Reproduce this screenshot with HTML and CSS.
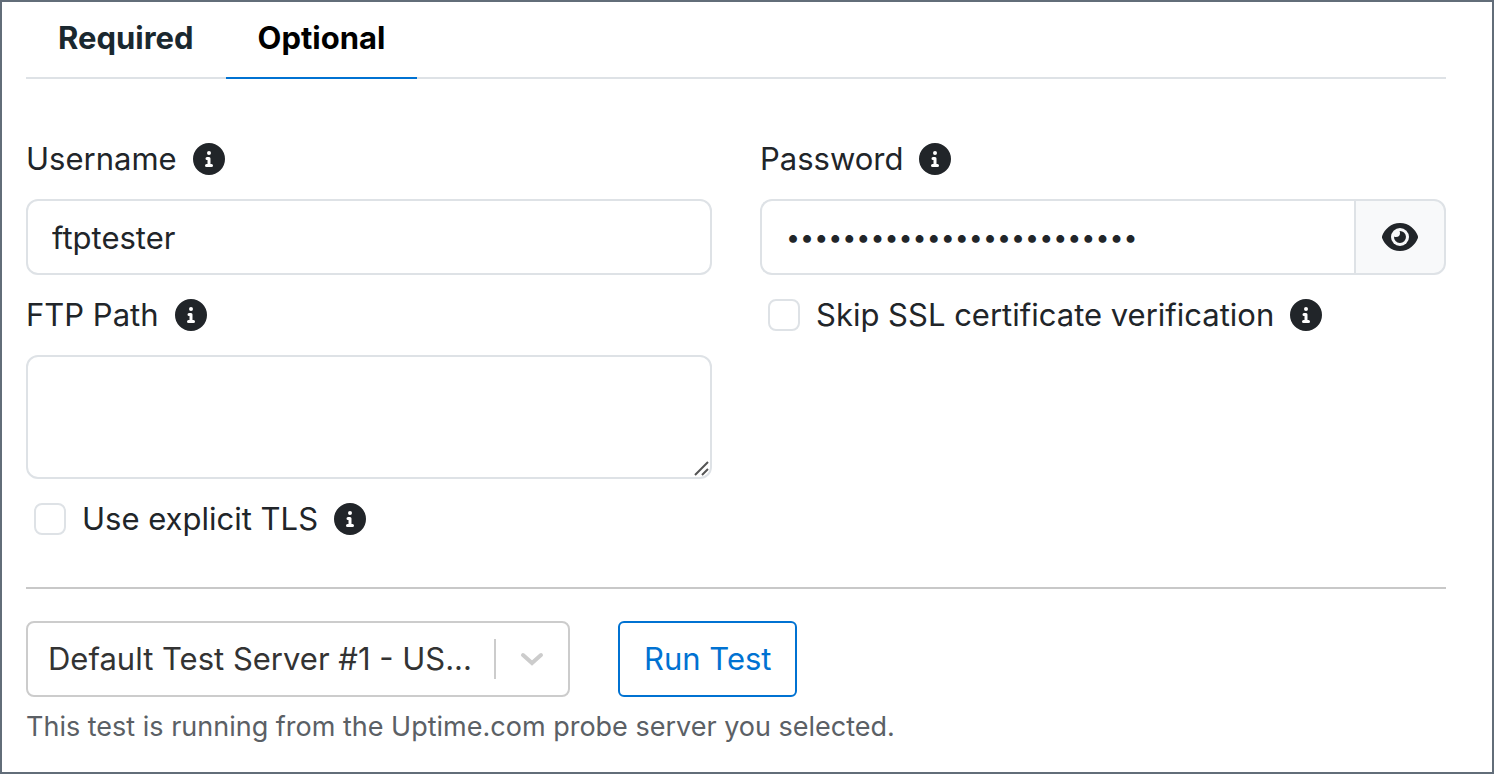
FILE: index.html
```html
<!DOCTYPE html>
<html lang="en">
<head>
    <meta charset="UTF-8">
    <meta name="viewport" content="width=device-width, initial-scale=1.0">
    <link rel="stylesheet" href="styles.css">
    <title>FTP Check</title>
</head>
<body>

<!-- shared icons -->
<svg class="sprite" aria-hidden="true">
    <symbol id="icon-info" viewBox="0 0 512 512">
        <path fill="currentColor" d="M256 0a256 256 0 1 0 0 512 256 256 0 0 0 0-512zm0 128a32 32 0 1 1 0 64 32 32 0 0 1 0-64zm40 256h-80a24 24 0 0 1 0-48h16v-64h-8a24 24 0 0 1 0-48h32a24 24 0 0 1 24 24v88h16a24 24 0 0 1 0 48z"/>
    </symbol>
</svg>

<form class="check-form">
    <div class="tabs">
        <button type="button" class="tab">Required</button>
        <button type="button" class="tab active">Optional</button>
    </div>

    <div class="columns">
        <div class="column">
            <div class="label-row">
                <label for="username">Username</label>
                <svg class="info"><use href="#icon-info"/></svg>
            </div>
            <input type="text" id="username" class="field" value="ftptester">

            <div class="label-row">
                <label for="ftp-path">FTP Path</label>
                <svg class="info"><use href="#icon-info"/></svg>
            </div>
            <div class="textarea-wrap">
                <textarea id="ftp-path" class="field"></textarea>
                <svg class="grip" viewBox="0 0 16 16"><path d="M1 14 14 1M8 14l6-6"/></svg>
            </div>

            <div class="label-row check">
                <input type="checkbox" id="explicit-tls">
                <label for="explicit-tls">Use explicit TLS</label>
                <svg class="info"><use href="#icon-info"/></svg>
            </div>
        </div>

        <div class="column">
            <div class="label-row">
                <label for="password">Password</label>
                <svg class="info"><use href="#icon-info"/></svg>
            </div>
            <div class="input-group">
                <input type="password" id="password" class="field" value="ftptester-password-123456">
                <button type="button" class="reveal" aria-label="Show password">
                    <svg viewBox="0 0 36 28">
                        <path fill="currentColor" d="M18 0C9 0 2.600 6.500.300 12.500a4 4 0 0 0 0 3C2.600 21.500 9 28 18 28s15.400-6.500 17.700-12.500a4 4 0 0 0 0-3C33.400 6.500 27 0 18 0z"/>
                        <circle cx="18" cy="14" r="9" fill="#f8f9fa"/>
                        <path fill="currentColor" d="M18 10a4 4 0 0 1-4 4q-1 0-2-.5A6 6 0 1 0 17.500 8q.5.900.5 2z"/>
                    </svg>
                </button>
            </div>

            <div class="label-row check">
                <input type="checkbox" id="skip-ssl">
                <label for="skip-ssl">Skip SSL certificate verification</label>
                <svg class="info"><use href="#icon-info"/></svg>
            </div>
        </div>
    </div>

    <hr>

    <div class="test-row">
        <div class="select-wrap">
            <select aria-label="Test server">
                <option>Default Test Server #1 - US...</option>
            </select>
            <svg class="arrow" viewBox="0 0 24 16"><path d="M3 4l9 8 9-8"/></svg>
        </div>
        <button type="button" class="run">Run Test</button>
    </div>
    <p class="help">This test is running from the Uptime.com probe server you selected.</p>
</form>

</body>
</html>
```
FILE: styles.css
```css
* {
    box-sizing: border-box;
}

body {
    margin: 0;
    min-height: 100vh;
    border: 2px solid #626d79;
    background-color: #fff;
    color: #212529;
    font-family: Inter, "Liberation Sans", sans-serif;
    font-size: 31px;
    line-height: 48px;
}

button, input, select, textarea {
    font: inherit;
    color: inherit;
    margin: 0;
}

.sprite {
    display: none;
}

.check-form {
    padding: 0 46px 0 24px;
}

/* Tabs */
.tabs {
    display: flex;
    border-bottom: 2px solid #dee2e6;
}

.tab {
    padding: 12px 32px 15px;
    margin-bottom: -2px;
    border: none;
    border-bottom: 2px solid transparent;
    background: none;
    color: #1a282f;
    font-weight: 700;
    cursor: pointer;
}

.tab.active {
    color: #000;
    border-bottom-color: #0072d2;
}

/* Fields */
.columns {
    display: grid;
    grid-template-columns: 1fr 1fr;
    gap: 48px;
    padding-top: 56px;
}

.column {
    display: flex;
    flex-direction: column;
    gap: 16px;
}

.label-row {
    display: flex;
    align-items: center;
    gap: 16px;
}

.check {
    padding-left: 8px;
}

.info {
    width: 32px;
    height: 32px;
}

.field {
    display: block;
    width: 100%;
    height: 76px;
    padding: 12px 24px;
    border: 2px solid #dee2e6;
    border-radius: 12px;
    background-color: #fff;
    outline: none;
}

.textarea-wrap {
    position: relative;
}

textarea.field {
    height: 124px;
    resize: vertical;
}

textarea::-webkit-resizer {
    display: none;
}

.grip {
    position: absolute;
    right: 2px;
    bottom: 2px;
    width: 16px;
    height: 16px;
    fill: none;
    stroke: #555;
    stroke-width: 2;
    pointer-events: none;
}

.input-group {
    display: flex;
}

.input-group .field {
    flex: 1;
    min-width: 0;
    border-right: none;
    border-radius: 12px 0 0 12px;
    font-size: 25px;
}

.reveal {
    display: flex;
    align-items: center;
    justify-content: center;
    width: 92px;
    border: 2px solid #dee2e6;
    border-radius: 0 12px 12px 0;
    background-color: #f8f9fa;
    cursor: pointer;
}

.reveal svg {
    width: 36px;
    height: 28px;
}

input[type="checkbox"] {
    appearance: none;
    width: 32px;
    height: 32px;
    border: 2px solid #dee2e6;
    border-radius: 8px;
    background-color: #fff;
}

input[type="checkbox"]:checked {
    background-color: #0072d2;
}

hr {
    margin: 44px 0 32px;
    border: none;
    border-top: 2px solid #c8c8c8;
}

/* Test server */
.test-row {
    display: flex;
    gap: 48px;
}

.select-wrap {
    position: relative;
    flex: 0 1 544px;
}

select {
    appearance: none;
    width: 100%;
    height: 76px;
    padding: 0 76px 0 20px;
    border: 2px solid #ccc;
    border-radius: 8px;
    background-color: #fff;
    color: #333;
}

.arrow {
    position: absolute;
    top: 18px;
    right: 2px;
    width: 74px;
    height: 40px;
    padding: 12px 24px;
    border-left: 2px solid #ccc;
    fill: none;
    stroke: #ccc;
    stroke-width: 4;
    stroke-linecap: round;
    pointer-events: none;
}

.run {
    padding: 12px 24px;
    border: 2px solid #0072d2;
    border-radius: 6px;
    background-color: #fff;
    color: #0072d2;
    cursor: pointer;
}

.help {
    margin: 10px 0 0;
    color: #5b6065;
    font-size: 27px;
    line-height: 40px;
}
```
